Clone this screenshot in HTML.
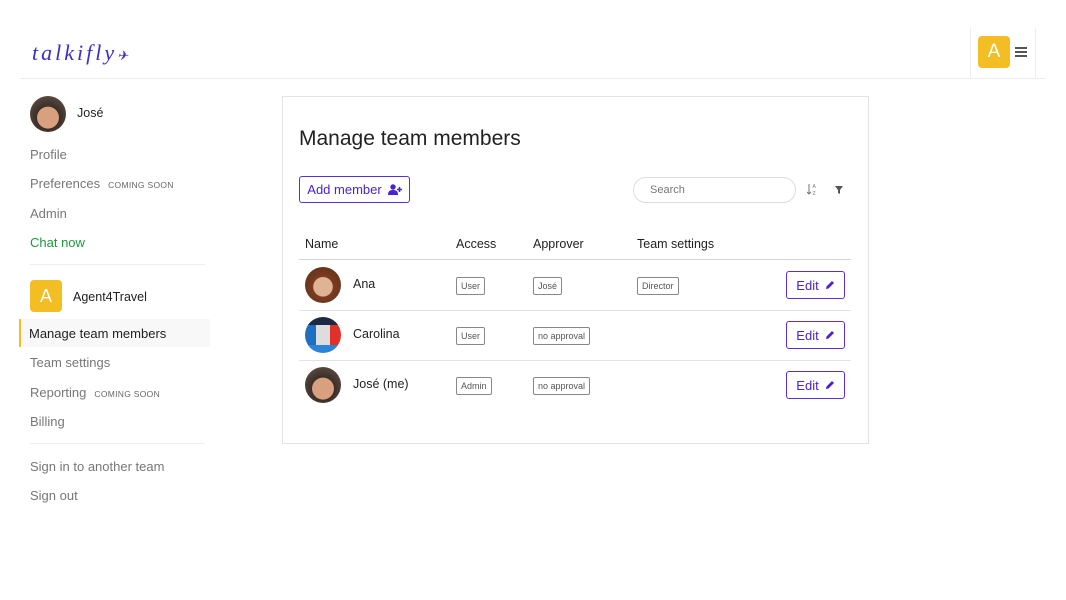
<!DOCTYPE html>
<html><head><meta charset="utf-8"><style>
*{box-sizing:border-box;margin:0;padding:0}
body{width:1066px;height:600px;background:#fff;font-family:"Liberation Sans",sans-serif;color:#222;position:relative;overflow:hidden}
.a{position:absolute}
.hdr{left:20px;top:78px;width:1026px;height:1px;background:#eee}
.logo{left:32px;top:40px;font-family:"Liberation Serif",serif;font-style:italic;font-size:22px;color:#3b2fc9;letter-spacing:3px;white-space:nowrap}
.rbox{left:970px;top:28px;width:66px;height:50px;border-left:1px solid #eee;border-right:1px solid #eee}
.av{background:#f3bd24;color:#fff;border-radius:4px;text-align:center}
.nav{font-size:13px;color:#777;white-space:nowrap}
.sm{font-size:8.5px;color:#666;margin-left:8px;letter-spacing:.3px}
.div{height:1px;background:#eee}
.card{left:282px;top:96px;width:587px;height:348px;border:1px solid #e3e3e3}
.btn{border:1px solid #5a2fd8;color:#4a22d0;border-radius:3px;font-size:13px;white-space:nowrap;display:flex;align-items:center;justify-content:center;gap:6px}
.tag{border:1px solid #888;border-radius:2px;font-size:9px;color:#555;padding:3px 4px;line-height:10px;white-space:nowrap}
.th{font-size:12.5px;color:#222;top:237px}
.row{left:299px;width:552px;height:1px;background:#e3e3e3}
.ph{width:36px;height:36px;border-radius:50%;overflow:hidden}
.nm{font-size:12.5px;color:#222;white-space:nowrap}
</style></head><body>
<div class="a logo">talkifly<span style="font-size:13px;letter-spacing:0">✈</span></div>
<div class="a rbox"></div>
<div class="a av" style="left:978px;top:36px;width:32px;height:32px;font-size:19px;line-height:32px">A</div>
<div class="a" style="left:1015px;top:47px;width:12px;height:2px;background:#555;box-shadow:0 4px 0 #555,0 8px 0 #555"></div>
<div class="a hdr"></div>

<div class="a ph" style="left:30px;top:96px;background:radial-gradient(circle at 50% 60%,#d8a07e 0 38%,#3a2e28 40%,#6b5a4e 100%)"></div>
<div class="a nm" style="left:77px;top:106px">José</div>
<div class="a nav" style="left:30px;top:147px">Profile</div>
<div class="a nav" style="left:30px;top:176px">Preferences<span class="sm">COMING SOON</span></div>
<div class="a nav" style="left:30px;top:206px">Admin</div>
<div class="a nav" style="left:30px;top:235px;color:#1a9a3e">Chat now</div>
<div class="a div" style="left:30px;top:264px;width:175px"></div>
<div class="a av" style="left:30px;top:280px;width:32px;height:32px;font-size:18px;line-height:32px">A</div>
<div class="a nm" style="left:73px;top:290px">Agent4Travel</div>
<div class="a" style="left:19px;top:319px;width:191px;height:28px;background:#f8f8f8;border-left:2px solid #f3bd24"></div>
<div class="a nav" style="left:29px;top:326px;color:#222">Manage team members</div>
<div class="a nav" style="left:30px;top:355px">Team settings</div>
<div class="a nav" style="left:30px;top:385px">Reporting<span class="sm">COMING SOON</span></div>
<div class="a nav" style="left:30px;top:414px">Billing</div>
<div class="a div" style="left:30px;top:443px;width:175px"></div>
<div class="a nav" style="left:30px;top:459px">Sign in to another team</div>
<div class="a nav" style="left:30px;top:488px">Sign out</div>

<div class="a card"></div>
<div class="a" style="left:299px;top:127px;font-size:21px;color:#222;white-space:nowrap">Manage team members</div>
<div class="a btn" style="left:299px;top:176px;width:111px;height:27px">Add member <svg width="14" height="11" viewBox="0 0 14 11"><circle cx="5" cy="3" r="2.7" fill="#4a22d0"/><path d="M0 11c0-4 2-5 5-5s5 1 5 5z" fill="#4a22d0"/><path d="M11.5 3v5M9 5.5h5" stroke="#4a22d0" stroke-width="1.6"/></svg></div>
<div class="a" style="left:633px;top:177px;width:163px;height:26px;border:1px solid #ddd;border-radius:13px;font-size:11px;color:#777;padding:6px 16px">Search</div>
<svg class="a" style="left:807px;top:183px" width="10" height="13" viewBox="0 0 10 13"><path d="M2 1v10M0 9l2 2 2-2" stroke="#777" fill="none" stroke-width="1"/><text x="5.5" y="5" font-size="5" fill="#777" font-family="Liberation Sans">A</text><text x="5.5" y="12" font-size="5" fill="#777" font-family="Liberation Sans">Z</text></svg>
<svg class="a" style="left:835px;top:186px" width="8" height="8" viewBox="0 0 8 8"><path d="M0 0h8L5 4v4L3 7V4z" fill="#555"/></svg>

<div class="a th" style="left:305px">Name</div>
<div class="a th" style="left:456px">Access</div>
<div class="a th" style="left:533px">Approver</div>
<div class="a th" style="left:637px">Team settings</div>
<div class="a row" style="top:259px;background:#d5d5d5"></div>
<div class="a row" style="top:310px"></div>
<div class="a row" style="top:360px"></div>

<div class="a ph" style="left:305px;top:267px;background:radial-gradient(circle at 50% 55%,#e0b394 0 35%,#7a3c22 38%,#5a2d18 100%)"></div>
<div class="a nm" style="left:353px;top:277px">Ana</div>
<div class="a tag" style="left:456px;top:277px">User</div>
<div class="a tag" style="left:533px;top:277px">José</div>
<div class="a tag" style="left:637px;top:277px">Director</div>

<div class="a ph" style="left:305px;top:317px;background:linear-gradient(90deg,#1e6fc0 0 30%,#ddd 30% 70%,#e0302a 70%)"><div style="position:absolute;left:0;top:0;width:36px;height:8px;background:#1c2a44"></div><div style="position:absolute;left:0;bottom:0;width:36px;height:8px;background:#2a85d8"></div></div>
<div class="a nm" style="left:353px;top:327px">Carolina</div>
<div class="a tag" style="left:456px;top:327px">User</div>
<div class="a tag" style="left:533px;top:327px">no approval</div>

<div class="a ph" style="left:305px;top:367px;background:radial-gradient(circle at 50% 60%,#d8a07e 0 38%,#3a2e28 40%,#6b5a4e 100%)"></div>
<div class="a nm" style="left:353px;top:377px">José (me)</div>
<div class="a tag" style="left:456px;top:377px">Admin</div>
<div class="a tag" style="left:533px;top:377px">no approval</div>

<div class="a btn" style="left:786px;top:271px;width:59px;height:28px">Edit <svg width="10" height="10" viewBox="0 0 10 10"><path d="M1 9l.5-2.5L7 1l2 2-5.5 5.5z" fill="#4a22d0"/></svg></div>
<div class="a btn" style="left:786px;top:321px;width:59px;height:28px">Edit <svg width="10" height="10" viewBox="0 0 10 10"><path d="M1 9l.5-2.5L7 1l2 2-5.5 5.5z" fill="#4a22d0"/></svg></div>
<div class="a btn" style="left:786px;top:371px;width:59px;height:28px">Edit <svg width="10" height="10" viewBox="0 0 10 10"><path d="M1 9l.5-2.5L7 1l2 2-5.5 5.5z" fill="#4a22d0"/></svg></div>
</body></html>
